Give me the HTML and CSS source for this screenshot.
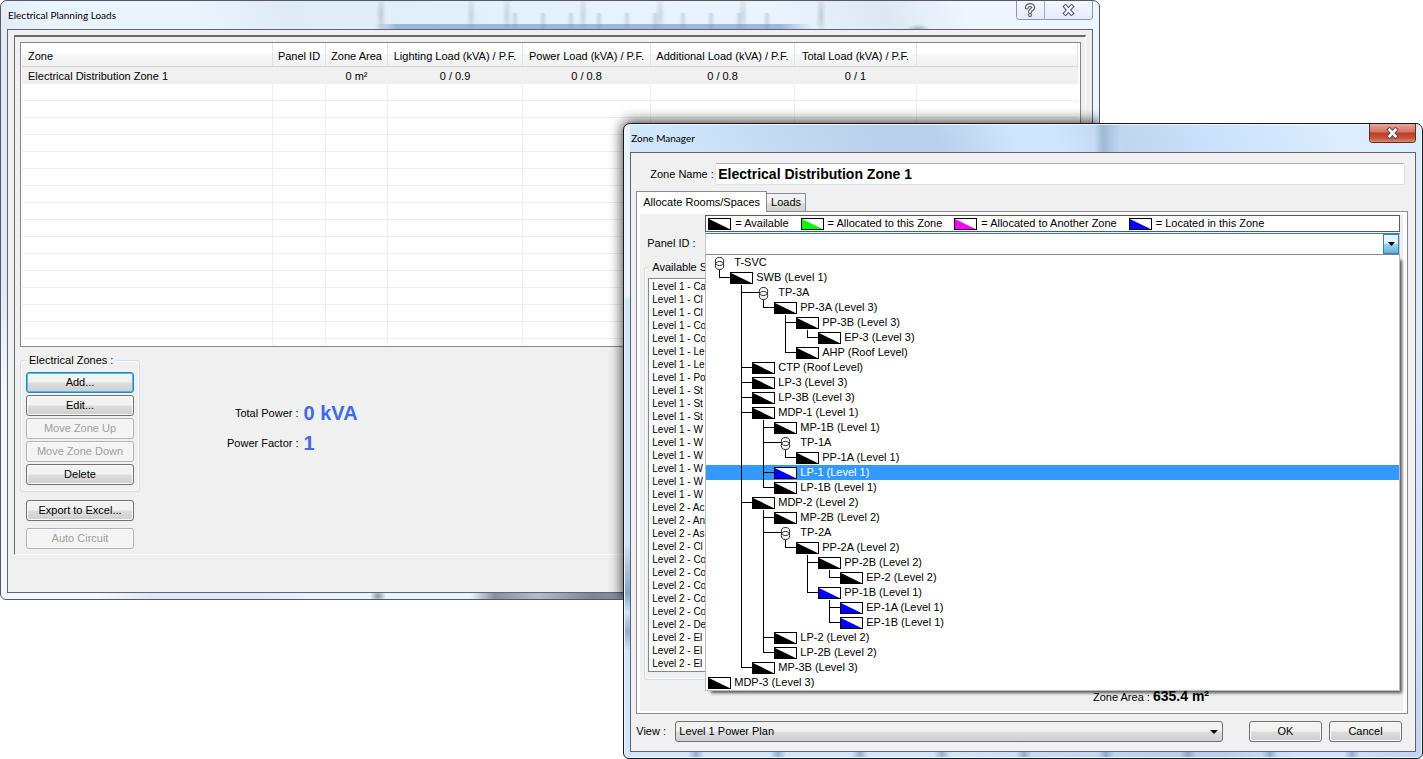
FILE: index.html
```html
<!DOCTYPE html>
<html lang="en">
<head>
<meta charset="utf-8">
<title>Electrical Planning Loads</title>
<link rel="stylesheet" href="styles.css">
</head>
<body>
<svg width="0" height="0" class="defs" aria-hidden="true">
  <symbol id="panel" viewBox="0 0 23 12">
    <rect x="0.5" y="0.5" width="22" height="11" fill="#fff" stroke="#000"/>
    <path d="M1 1L21.500 11H1Z" fill="currentColor"/>
  </symbol>
  <symbol id="transformer" viewBox="0 0 23 15">
    <g fill="none" stroke="#222">
      <ellipse cx="11.500" cy="6.500" rx="4.200" ry="4"/>
      <ellipse cx="11.500" cy="10.500" rx="4.200" ry="4"/>
    </g>
  </symbol>
</svg>
<main class="desktop">

<section class="window loads-window" aria-labelledby="loads-title">
  <header class="titlebar">
    <h1 id="loads-title">Electrical Planning Loads</h1>
    <div class="window-controls">
      <button type="button" class="help" aria-label="Help"><svg width="12" height="14" viewBox="0 0 12 14"><g fill="none" stroke-linecap="round"><path d="M2.800 4.500C2.800 1.200 9.200 1.200 9.200 4.500C9.200 6.700 6 6.300 6 9M6 12V12.100" stroke="#555b70" stroke-width="4"/><path d="M2.800 4.500C2.800 1.200 9.200 1.200 9.200 4.500C9.200 6.700 6 6.300 6 9M6 12V12.100" stroke="#f4f7fc" stroke-width="1.800"/></g></svg></button>
      <button type="button" class="close" aria-label="Close"><svg width="13" height="12" viewBox="0 0 13 12"><g fill="none"><path d="M2 1L11 11M11 1L2 11" stroke="#555b70" stroke-width="4.400"/><path d="M2.700 1.800L10.300 10.200M10.300 1.800L2.700 10.200" stroke="#f4f7fc" stroke-width="2.200"/></g></svg></button>
    </div>
  </header>
  <div class="client">
    <div class="bevel">
      <div class="grid-box">
        <table class="grid">
          <colgroup><col class="c-zone"><col class="c-panel"><col class="c-area"><col class="c-light"><col class="c-power"><col class="c-add"><col class="c-total"><col></colgroup>
          <thead>
            <tr><th scope="col">Zone</th><th scope="col">Panel ID</th><th scope="col">Zone Area</th><th scope="col">Lighting Load (kVA) / P.F.</th><th scope="col">Power Load (kVA) / P.F.</th><th scope="col">Additional Load (kVA) / P.F.</th><th scope="col">Total Load (kVA) / P.F.</th><th></th></tr>
          </thead>
          <tbody>
            <tr class="current"><td>Electrical Distribution Zone 1</td><td></td><td>0 m²</td><td>0 / 0.9</td><td>0 / 0.8</td><td>0 / 0.8</td><td>0 / 1</td><td></td></tr>
            <tr><td></td><td></td><td></td><td></td><td></td><td></td><td></td><td></td></tr>
            <tr><td></td><td></td><td></td><td></td><td></td><td></td><td></td><td></td></tr>
            <tr><td></td><td></td><td></td><td></td><td></td><td></td><td></td><td></td></tr>
            <tr><td></td><td></td><td></td><td></td><td></td><td></td><td></td><td></td></tr>
            <tr><td></td><td></td><td></td><td></td><td></td><td></td><td></td><td></td></tr>
            <tr><td></td><td></td><td></td><td></td><td></td><td></td><td></td><td></td></tr>
            <tr><td></td><td></td><td></td><td></td><td></td><td></td><td></td><td></td></tr>
            <tr><td></td><td></td><td></td><td></td><td></td><td></td><td></td><td></td></tr>
            <tr><td></td><td></td><td></td><td></td><td></td><td></td><td></td><td></td></tr>
            <tr><td></td><td></td><td></td><td></td><td></td><td></td><td></td><td></td></tr>
            <tr><td></td><td></td><td></td><td></td><td></td><td></td><td></td><td></td></tr>
            <tr><td></td><td></td><td></td><td></td><td></td><td></td><td></td><td></td></tr>
            <tr><td></td><td></td><td></td><td></td><td></td><td></td><td></td><td></td></tr>
            <tr><td></td><td></td><td></td><td></td><td></td><td></td><td></td><td></td></tr>
            <tr><td></td><td></td><td></td><td></td><td></td><td></td><td></td><td></td></tr>
            <tr class="rest"><td></td><td></td><td></td><td></td><td></td><td></td><td></td><td></td></tr>
          </tbody>
        </table>
      </div>
      <div class="lower">
        <div class="actions">
          <fieldset class="group zone-actions">
            <legend>Electrical Zones :</legend>
            <button type="button" class="btn default">Add...</button>
            <button type="button" class="btn">Edit...</button>
            <button type="button" class="btn" disabled>Move Zone Up</button>
            <button type="button" class="btn" disabled>Move Zone Down</button>
            <button type="button" class="btn">Delete</button>
          </fieldset>
          <div class="extra-actions">
            <button type="button" class="btn">Export to Excel...</button>
            <button type="button" class="btn" disabled>Auto Circuit</button>
          </div>
        </div>
        <dl class="totals">
          <dt>Total Power :</dt><dd>0 kVA</dd>
          <dt>Power Factor :</dt><dd>1</dd>
        </dl>
      </div>
    </div>
  </div>
  <div class="cast-shadow" aria-hidden="true"></div>
</section>

<section class="window manager-window" aria-labelledby="manager-title">
  <header class="titlebar">
    <h2 id="manager-title">Zone Manager</h2>
    <div class="window-controls danger">
      <button type="button" class="close" aria-label="Close"><svg width="13" height="12" viewBox="0 0 13 12"><g fill="none"><path d="M2 1L11 11M11 1L2 11" stroke="#5b4a58" stroke-width="4.400"/><path d="M2.700 1.800L10.300 10.200M10.300 1.800L2.700 10.200" stroke="#fff" stroke-width="2.600"/></g></svg></button>
    </div>
  </header>
  <div class="client">
    <div class="name-row">
      <label for="zone-name">Zone Name :</label>
      <input id="zone-name" type="text" value="Electrical Distribution Zone 1">
    </div>
    <div class="tabs" role="tablist">
      <button type="button" role="tab" aria-selected="true" class="tab active">Allocate Rooms/Spaces</button>
      <button type="button" role="tab" aria-selected="false" class="tab">Loads</button>
    </div>
    <div class="tab-panel" role="tabpanel">
      <div class="panel-body">
        <div class="panel-grid">
          <ul class="key">
            <li><svg class="icon"><use href="#panel"/></svg>= Available</li>
            <li><svg class="icon allocated"><use href="#panel"/></svg>= Allocated to this Zone</li>
            <li><svg class="icon other"><use href="#panel"/></svg>= Allocated to Another Zone</li>
            <li><svg class="icon located"><use href="#panel"/></svg>= Located in this Zone</li>
          </ul>
          <label class="panel-label" for="panel-id">Panel ID :</label>
          <div class="combo">
            <input id="panel-id" type="text" role="combobox" aria-expanded="true" aria-controls="panel-tree">
            <button type="button" class="arrow" aria-label="Show panels"><svg width="7" height="4" viewBox="0 0 7 4"><path d="M0 0H7L3.500 4Z"/></svg></button>
            <div class="popup">
              <ul class="tree" id="panel-tree" role="tree">
                <li class="tx"><span class="node"><svg class="icon"><use href="#transformer"/></svg>T-SVC</span>
                  <ul>
                    <li><span class="node"><svg class="icon"><use href="#panel"/></svg>SWB (Level 1)</span>
                      <ul>
                        <li class="tx"><span class="node"><svg class="icon"><use href="#transformer"/></svg>TP-3A</span>
                          <ul>
                            <li><span class="node"><svg class="icon"><use href="#panel"/></svg>PP-3A (Level 3)</span>
                              <ul>
                                <li><span class="node"><svg class="icon"><use href="#panel"/></svg>PP-3B (Level 3)</span>
                                  <ul>
                                    <li><span class="node"><svg class="icon"><use href="#panel"/></svg>EP-3 (Level 3)</span></li>
                                  </ul>
                                </li>
                                <li><span class="node"><svg class="icon"><use href="#panel"/></svg>AHP (Roof Level)</span></li>
                              </ul>
                            </li>
                          </ul>
                        </li>
                        <li><span class="node"><svg class="icon"><use href="#panel"/></svg>CTP (Roof Level)</span></li>
                        <li><span class="node"><svg class="icon"><use href="#panel"/></svg>LP-3 (Level 3)</span></li>
                        <li><span class="node"><svg class="icon"><use href="#panel"/></svg>LP-3B (Level 3)</span></li>
                        <li><span class="node"><svg class="icon"><use href="#panel"/></svg>MDP-1 (Level 1)</span>
                          <ul>
                            <li><span class="node"><svg class="icon"><use href="#panel"/></svg>MP-1B (Level 1)</span></li>
                            <li class="tx"><span class="node"><svg class="icon"><use href="#transformer"/></svg>TP-1A</span>
                              <ul>
                                <li><span class="node"><svg class="icon"><use href="#panel"/></svg>PP-1A (Level 1)</span></li>
                              </ul>
                            </li>
                            <li><span class="node selected"><svg class="icon located"><use href="#panel"/></svg>LP-1 (Level 1)</span></li>
                            <li><span class="node"><svg class="icon"><use href="#panel"/></svg>LP-1B (Level 1)</span></li>
                          </ul>
                        </li>
                        <li><span class="node"><svg class="icon"><use href="#panel"/></svg>MDP-2 (Level 2)</span>
                          <ul>
                            <li><span class="node"><svg class="icon"><use href="#panel"/></svg>MP-2B (Level 2)</span></li>
                            <li class="tx"><span class="node"><svg class="icon"><use href="#transformer"/></svg>TP-2A</span>
                              <ul>
                                <li><span class="node"><svg class="icon"><use href="#panel"/></svg>PP-2A (Level 2)</span>
                                  <ul>
                                    <li><span class="node"><svg class="icon"><use href="#panel"/></svg>PP-2B (Level 2)</span>
                                      <ul>
                                        <li><span class="node"><svg class="icon"><use href="#panel"/></svg>EP-2 (Level 2)</span></li>
                                      </ul>
                                    </li>
                                    <li><span class="node"><svg class="icon located"><use href="#panel"/></svg>PP-1B (Level 1)</span>
                                      <ul>
                                        <li><span class="node"><svg class="icon located"><use href="#panel"/></svg>EP-1A (Level 1)</span></li>
                                        <li><span class="node"><svg class="icon located"><use href="#panel"/></svg>EP-1B (Level 1)</span></li>
                                      </ul>
                                    </li>
                                  </ul>
                                </li>
                              </ul>
                            </li>
                            <li><span class="node"><svg class="icon"><use href="#panel"/></svg>LP-2 (Level 2)</span></li>
                            <li><span class="node"><svg class="icon"><use href="#panel"/></svg>LP-2B (Level 2)</span></li>
                          </ul>
                        </li>
                        <li><span class="node"><svg class="icon"><use href="#panel"/></svg>MP-3B (Level 3)</span></li>
                      </ul>
                    </li>
                  </ul>
                </li>
                <li><span class="node"><svg class="icon"><use href="#panel"/></svg>MDP-3 (Level 3)</span></li>
              </ul>
            </div>
          </div>
        </div>
        <fieldset class="group spaces">
          <legend><label for="spaces">Available Sp</label></legend>
          <select id="spaces" multiple size="30">
            <option>Level 1 - Ca</option><option>Level 1 - Cl</option><option>Level 1 - Cl</option><option>Level 1 - Co</option><option>Level 1 - Co</option><option>Level 1 - Le</option><option>Level 1 - Le</option><option>Level 1 - Po</option><option>Level 1 - St</option><option>Level 1 - St</option><option>Level 1 - St</option><option>Level 1 - W</option><option>Level 1 - W</option><option>Level 1 - W</option><option>Level 1 - W</option><option>Level 1 - W</option><option>Level 1 - W</option>
            <option>Level 2 - Ac</option><option>Level 2 - An</option><option>Level 2 - As</option><option>Level 2 - Cl</option><option>Level 2 - Co</option><option>Level 2 - Co</option><option>Level 2 - Co</option><option>Level 2 - Co</option><option>Level 2 - Co</option><option>Level 2 - De</option><option>Level 2 - El</option><option>Level 2 - El</option><option>Level 2 - El</option>
          </select>
        </fieldset>
        <p class="area">Zone Area : <strong>635.4 m²</strong></p>
      </div>
    </div>
    <footer class="footer">
      <label for="view">View :</label>
      <div class="view-select">
        <select id="view"><option>Level 1 Power Plan</option></select>
      </div>
      <div class="footer-buttons">
        <button type="button" class="btn">OK</button>
        <button type="button" class="btn">Cancel</button>
      </div>
    </footer>
  </div>
</section>
</main>
</body>
</html>
```
FILE: styles.css
```css
* { box-sizing: border-box; }
body {
  margin: 0;
  background: #fff;
  color: #000;
  font: 11px/13px "Liberation Sans", Arial, sans-serif;
}
button, input, select { font: inherit; color: inherit; margin: 0; }
ul, dl, dd, p { margin: 0; padding: 0; list-style: none; }
.defs { position: absolute; }
.desktop { position: relative; min-height: 100vh; overflow: hidden; }

/* Window frames */
.window {
  position: absolute;
  border: 1px solid #55595f;
  border-radius: 7px 7px 6px 6px;
  padding: 0 6px 6px;
}
.loads-window {
  top: 0;
  left: 0;
  width: 77.3%;
  overflow: hidden;
  background:
    linear-gradient(90deg, transparent 34%, rgba(110, 145, 200, .6) 36%, rgba(110, 145, 200, .6) 71%, transparent 74%) 0 23px / 100% 6px no-repeat,
    radial-gradient(ellipse 5px 24px at 50% 50%, rgba(90, 105, 130, .25), transparent) 375px 0 / 10px 28px no-repeat,
    radial-gradient(ellipse 5px 24px at 50% 50%, rgba(90, 105, 130, .2), transparent) 465px 0 / 10px 28px no-repeat,
    radial-gradient(ellipse 5px 24px at 50% 50%, rgba(90, 105, 130, .2), transparent) 501px 0 / 10px 28px no-repeat,
    radial-gradient(ellipse 5px 24px at 50% 50%, rgba(90, 105, 130, .2), transparent) 577px 0 / 10px 28px no-repeat,
    radial-gradient(ellipse 5px 24px at 50% 50%, rgba(90, 105, 130, .2), transparent) 654px 0 / 10px 28px no-repeat,
    radial-gradient(ellipse 5px 24px at 50% 50%, rgba(90, 105, 130, .2), transparent) 737px 0 / 10px 28px no-repeat,
    radial-gradient(ellipse 5px 24px at 50% 50%, rgba(90, 105, 130, .25), transparent) 815px 0 / 10px 28px no-repeat,
    repeating-linear-gradient(90deg, transparent 0 20px, rgba(90, 105, 130, .2) 24px, transparent 28px) 490px 12px / 290px 16px no-repeat,
    radial-gradient(ellipse 12px 6px at 50% 100%, rgba(90, 105, 120, .5), transparent) 905px 20px / 24px 9px no-repeat,
    linear-gradient(90deg, transparent, rgba(70, 80, 95, .6) 10%, rgba(70, 80, 95, .3) 28%, rgba(70, 80, 95, .65) 50%, rgba(100, 115, 135, .4)) 470px 100% / 240px 6px no-repeat,
    radial-gradient(ellipse 8px 6px, rgba(70, 80, 95, .6), transparent) 368px 100% / 18px 6px no-repeat,
    linear-gradient(65deg, #f2f8ff 0 7%, #dfe8f4 11% 18%, #eaf4ff 23% 34%, #e0ebf8 40%, #e6f1fe 60%, #eaf4ff 76%, #dde8f4 84%, #eef6ff 90%);
}
.manager-window {
  top: 123px;
  left: 43.8%;
  right: 0;
  border-color: #15181c;
  box-shadow: inset 0 0 0 1px #eef7ff;
  background:
    linear-gradient(90deg, transparent, rgba(120, 150, 185, .5) 35%, transparent) 470px 0 / 26px 28px no-repeat,
    repeating-linear-gradient(90deg, transparent 0 64px, rgba(110, 140, 175, .6) 72px, transparent 80px 82px) 0 100% / 100% 6px no-repeat,
    linear-gradient(#eaf5ff 27%, transparent 28% 66%, rgba(90, 120, 160, .6) 74%, transparent 77%, rgba(90, 120, 160, .5) 80%, transparent 83%) 0 0 / 6px 100% no-repeat,
    linear-gradient(65deg, #cfe6fb 0 30%, #b9d0ea 50% 55%, #cfe5fd 62% 66%, #bfd6ee 72%, #c9e1fa 80%, #dceefe 92%);
}
.cast-shadow {
  position: absolute;
  top: 122px;
  left: 43.8vw;
  right: 0;
  bottom: 0;
  border-radius: 7px 0 0 0;
  box-shadow: 0 0 13px 2px rgba(0, 0, 0, .75);
}
.titlebar {
  display: flex;
  justify-content: space-between;
  align-items: flex-start;
  height: 28px;
}
.titlebar h1, .titlebar h2 {
  margin: 0;
  padding-left: 1px;
  font: 10px/29px Lato, "Open Sans", sans-serif;
}
.window-controls {
  display: flex;
  height: 19px;
  border: 1px solid #8f98a8;
  border-top: 0;
  border-radius: 0 0 4px 4px;
  overflow: hidden;
}
.window-controls button {
  display: grid;
  place-items: center;
  width: 47px;
  padding: 0;
  border: 0;
  background: linear-gradient(#f3f8fe, #e3ecf7);
}
.window-controls .help { width: 28px; border-right: 1px solid #a4adbc; }
.window-controls.danger { border-color: #5e2a2a; }
.window-controls.danger button { width: 45px; background: linear-gradient(#e9a598, #d4715f 45%, #b93a28 50%, #c9583c 80%, #dc8a6a); }
.client { background: #f0f0f0; border: 1px solid #60646c; }

/* Shared controls */
.btn {
  height: 21px;
  padding: 0;
  border: 1px solid #707070;
  border-radius: 3px;
  background: linear-gradient(#f2f2f2 0 48%, #dddddd 52%, #cfcfcf);
  box-shadow: inset 0 0 0 1px #fafafa;
  line-height: 17px;
}
.btn.default { border-color: #2f82b5; box-shadow: inset 0 0 0 1px #3fc0ee; }
.btn:disabled { color: #a0a0a0; border-color: #adb2b5; background: #f4f4f4; }
.group { min-width: 0; margin: 0; border: 1px solid #d5dfe5; border-radius: 3px; box-shadow: inset 0 0 0 1px #fbfbfb; }
.group legend { padding: 0 2px; line-height: 14px; background: #f0f0f0; }

/* Loads window */
.loads-window .client { padding: 5px 6px 37px; }
.bevel {
  padding: 5px 4px 5px 5px;
  border: 1px solid #fafafa;
  border-top: 2px solid #696969;
  border-left-color: #696969;
}
.grid-box { border: 1px solid #828790; background: #fff; padding: 0 2px 0 1px; }
.grid { width: 100%; border-collapse: separate; border-spacing: 0; table-layout: fixed; }
.c-zone { width: 251px; }
.c-panel { width: 53px; }
.c-area { width: 62px; }
.c-light { width: 135px; }
.c-power { width: 128px; }
.c-add { width: 144px; }
.c-total { width: 122px; }
.grid th {
  height: 24px;
  padding: 4px 0 0;
  font-weight: 400;
  white-space: nowrap;
  border-right: 1px solid #e2e3e6;
  border-bottom: 1px solid #d5d5d5;
  background: linear-gradient(#fff 45%, #f5f6f8 50%, #f1f2f4);
}
.grid td { height: 17px; padding: 2px 0 0; border-right: 1px solid #efefef; border-bottom: 1px solid #efefef; text-align: center; }
.grid th:first-child, .grid td:first-child { text-align: left; padding-left: 6px; }
.grid td:last-child { border-right: 0; }
.grid .current td { background: #f0f0f0; }
.grid .rest td { height: 7px; border-bottom: 0; }
.lower { display: flex; gap: 87px; padding-top: 6px; }
.actions { flex: none; width: 120px; }
.zone-actions { display: flex; flex-direction: column; gap: 2px; padding: 5px 5px 6px; }
.zone-actions legend { margin-left: 1px; }
.extra-actions { display: flex; flex-direction: column; gap: 7px; padding: 8px 6px 0; }
.totals { display: grid; grid-template-columns: max-content auto; column-gap: 5px; align-content: start; align-items: center; padding-top: 45px; }
.totals dt { text-align: right; line-height: 30px; }
.totals dd { color: #4169e1; font-size: 20px; font-weight: 700; line-height: 30px; }

/* Zone manager */
.manager-window .client { padding: 10px 7px 9px 5px; }
.name-row { display: flex; align-items: center; padding: 0 3px 0 14px; margin-bottom: 6px; }
.name-row label { flex: none; width: 65px; }
.name-row input {
  flex: 1;
  min-width: 0;
  height: 22px;
  padding: 0 2px;
  border: 1px solid #dbe2ea;
  border-top-color: #abadb3;
  border-radius: 2px;
  background: #fff;
  font-size: 14px;
  font-weight: 700;
}
.tabs { display: flex; align-items: flex-end; height: 20px; }
.tab {
  height: 18px;
  padding: 0 4px;
  border: 1px solid #898c95;
  border-bottom: 0;
  border-left: 0;
  background: linear-gradient(#f2f2f2 50%, #dddddd 54%, #d0d0d0);
}
.tab.active {
  height: 21px;
  margin-bottom: -1px;
  position: relative;
  padding: 0 6px;
  border-left: 1px solid #898c95;
  background: #fff;
}
.tab-panel { padding: 2px 4px 2px 3px; border: 1px solid #898c95; background: #fff; }
.panel-body { padding: 1px 3px 6px; background: #f0f0f0; }
.panel-grid { display: grid; grid-template-columns: 62px 1fr; }
.key {
  grid-column: 2;
  display: flex;
  align-items: center;
  gap: 12px;
  height: 17px;
  margin-bottom: 1px;
  padding-left: 2px;
  border: 1px solid #5a5a5a;
  background: #fff;
  white-space: nowrap;
}
.key li { display: flex; align-items: center; gap: 4px; }
.icon { display: block; flex: none; width: 23px; height: 12px; color: #000; }
.icon.allocated { color: #0f0; }
.icon.other { color: #f0f; }
.icon.located { color: #00f; }
.panel-label { padding: 4px 0 0 4px; }
.combo { position: relative; display: flex; height: 22px; border: 1px solid #b5cfe7; border-top-color: #3d7bad; background: #fff; }
.combo input { flex: 1; min-width: 0; padding: 0 2px; border: 0; outline: 0; }
.arrow { display: grid; place-items: center; width: 16px; padding: 0; border: 1px solid #3c7fb1; background: linear-gradient(#e5f4fc 48%, #98d1ef 52%, #68b3db); }
.popup {
  position: absolute;
  z-index: 2;
  top: 100%;
  left: -1px;
  right: -1px;
  border: 1px solid #b9bdc9;
  border-top-color: #828790;
  background: #fff;
  box-shadow: 4px 4px 3px -2px rgba(0, 0, 0, .65);
}

/* Panel tree */
.tree { position: relative; isolation: isolate; overflow: hidden; padding-left: 2px; color: #000; }
.tree li { position: relative; }
.tree ul { padding-left: 22px; }
.tree ul > li::before {
  content: "";
  position: absolute;
  top: 0;
  bottom: 0;
  left: -11px;
  border-left: 1px solid #000;
}
.tree ul > li:last-child::before { bottom: auto; height: 8px; }
.tree ul > li::after {
  content: "";
  position: absolute;
  top: 7px;
  left: -11px;
  width: 11px;
  border-top: 1px solid #000;
}
.tree ul > .tx::after { width: 18px; }
.node { position: relative; display: flex; gap: 3px; height: 15px; line-height: 14px; white-space: nowrap; }
.node .icon { margin-top: 2px; }
.tx > .node .icon { height: 15px; margin-top: 0; }
.selected { color: #fff; }
.selected::before {
  content: "";
  position: absolute;
  z-index: -1;
  top: 0;
  bottom: 0;
  left: -100px;
  right: 0;
  background: #3399ff;
}
.node.selected { position: static; }

.spaces { margin: 5px 4px 0 1px; padding: 4px 3px 7px; }
.spaces legend { margin-left: 2px; }
.spaces select { display: block; width: 280px; padding: 2px 1px 0; border: 1px solid #828790; border-radius: 0; background: #fff; outline: 0; font-size: 10px; }
.spaces option { min-height: 13px; padding: 0 0 0 2px; line-height: 13px; }
.area { padding: 8px 191px 0 0; text-align: right; line-height: 16px; }
.area strong { font-size: 14px; }
.footer { display: flex; align-items: center; padding-right: 6px; margin-top: 7px; }
.footer label { flex: none; width: 39px; }
.view-select { position: relative; flex: 1; }
.view-select::after {
  content: "";
  position: absolute;
  top: 9px;
  right: 5px;
  border: 4px solid transparent;
  border-top-color: #000;
  border-bottom: 0;
  pointer-events: none;
}
.view-select select {
  appearance: none;
  display: block;
  width: 100%;
  height: 21px;
  padding: 0 3px;
  border: 1px solid #707070;
  border-radius: 3px;
  background: linear-gradient(#f2f2f2 0 48%, #dddddd 52%, #cfcfcf);
}
.footer-buttons { display: flex; gap: 7px; padding-left: 26px; }
.footer-buttons .btn { width: 73px; }
```
